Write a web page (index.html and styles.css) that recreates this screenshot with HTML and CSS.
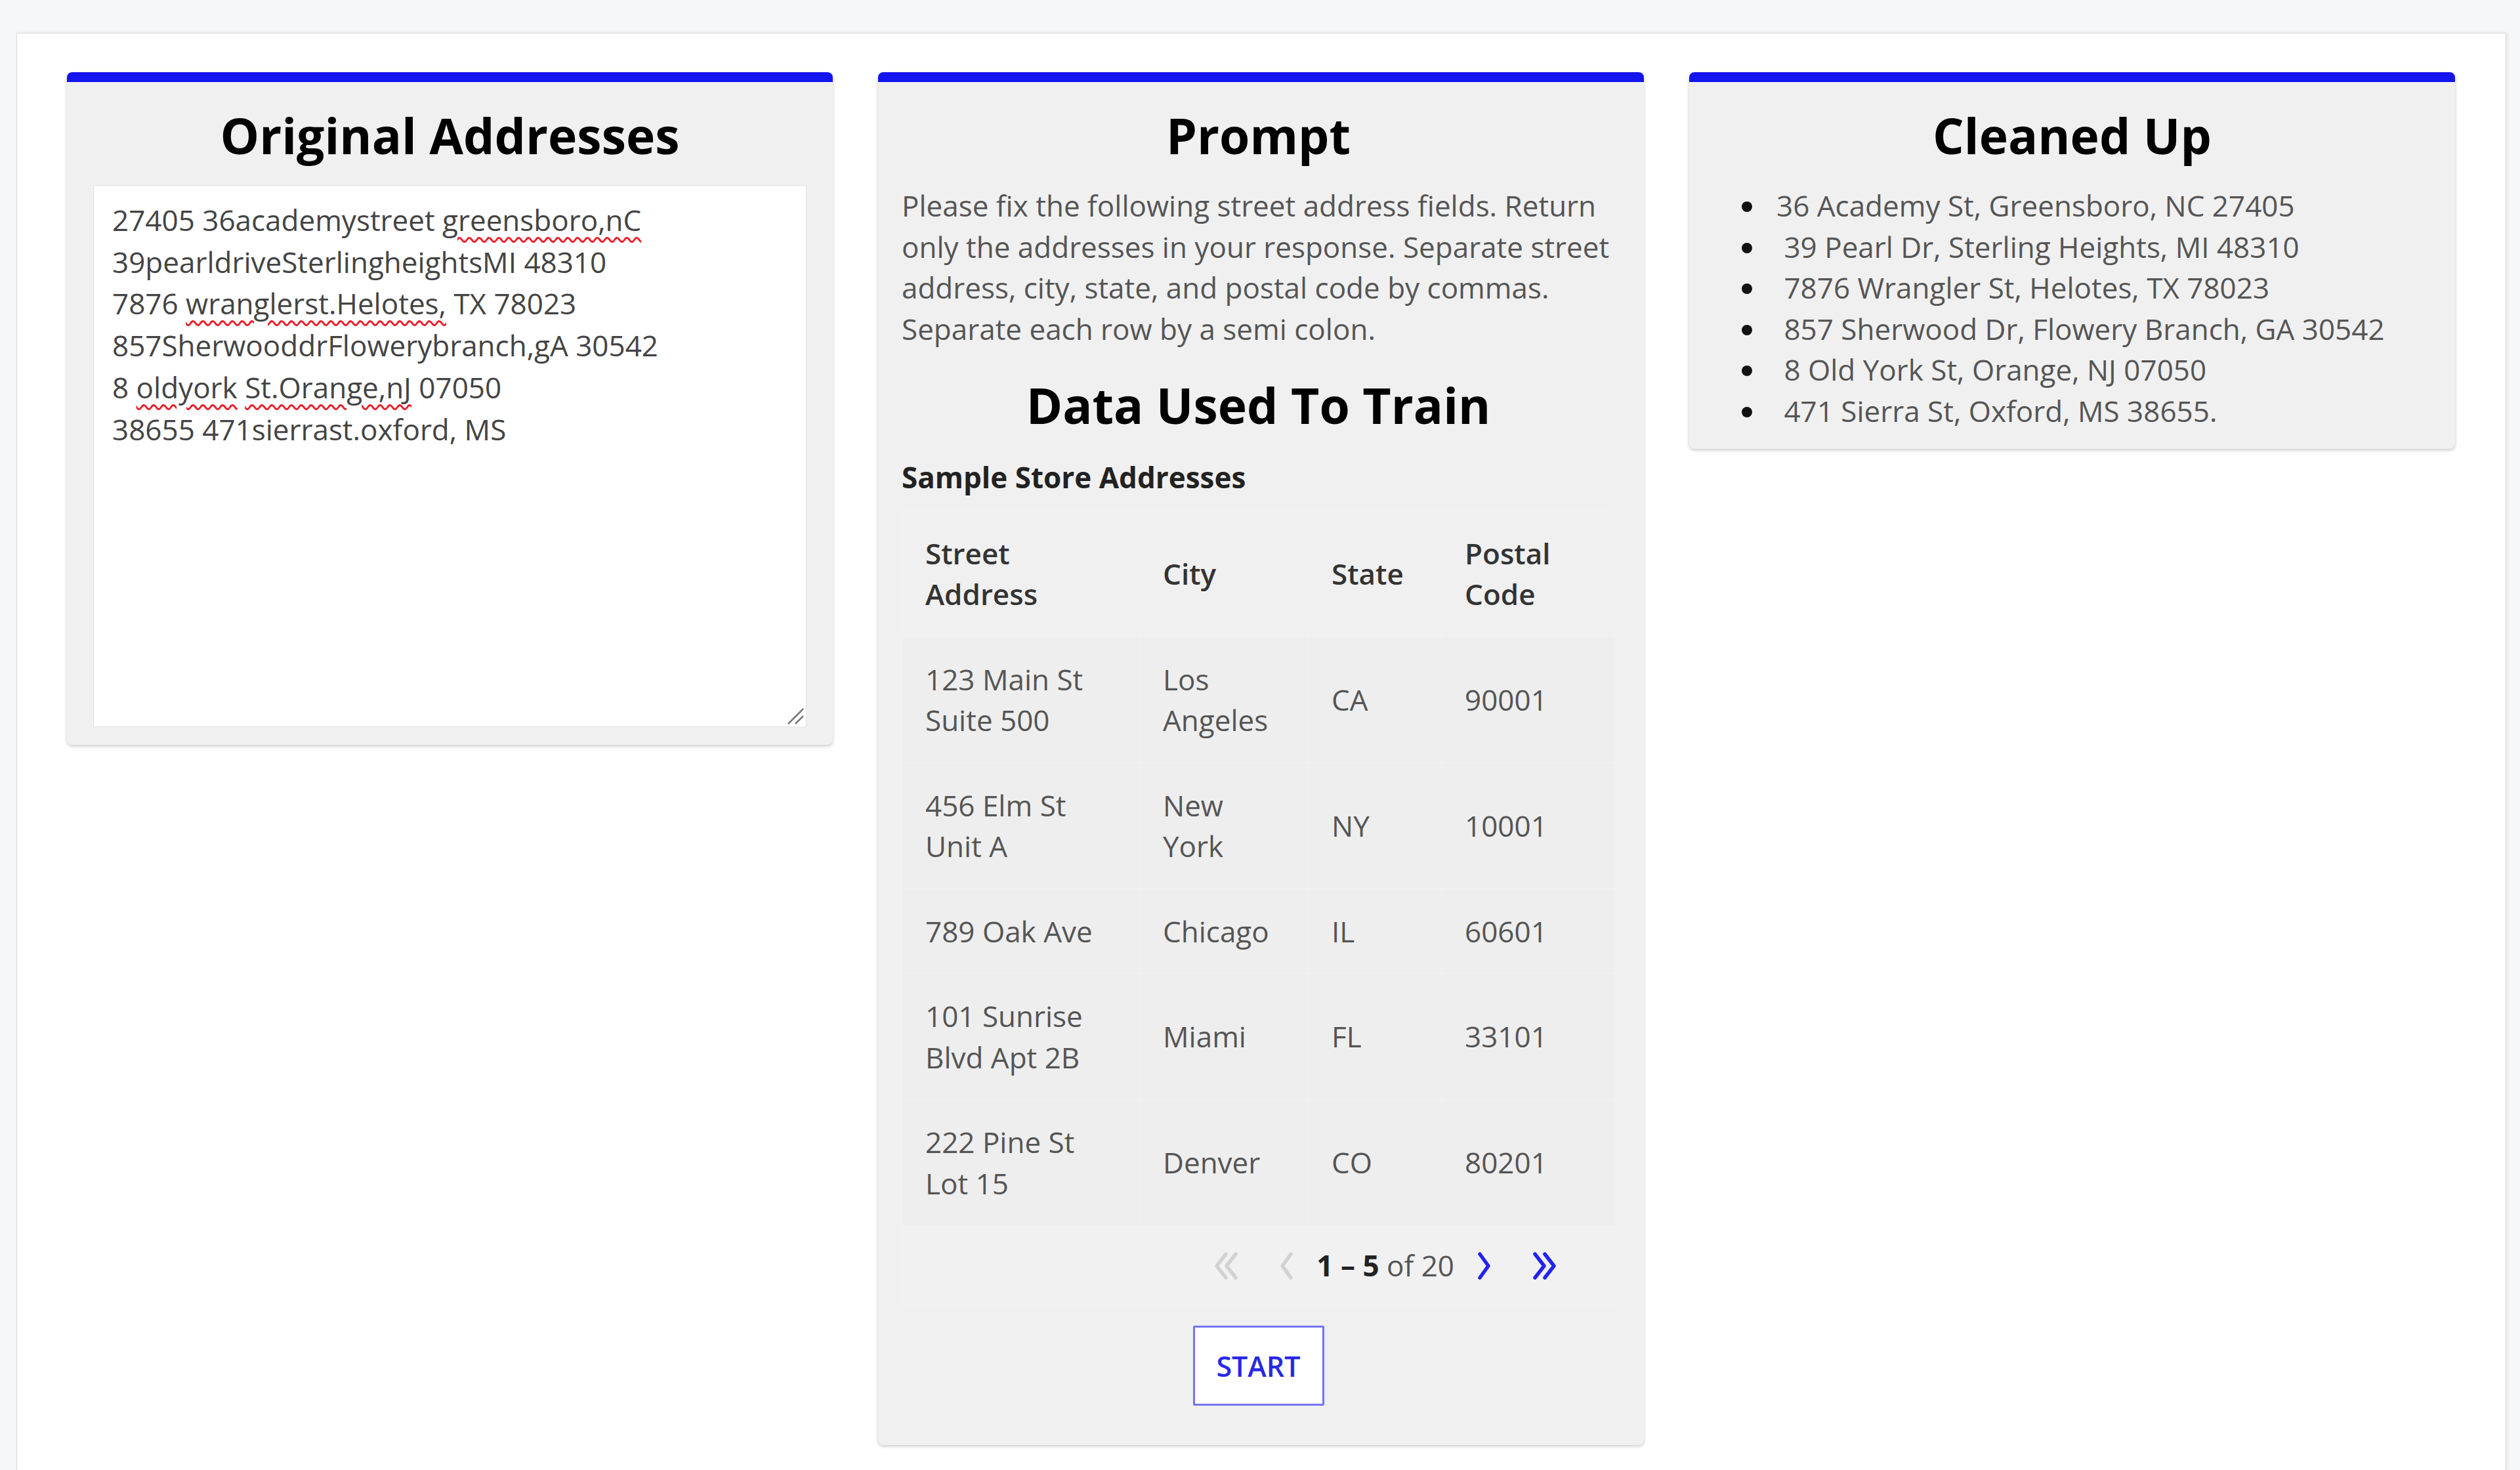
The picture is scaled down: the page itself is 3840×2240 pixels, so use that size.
FILE: index.html
```html
<!DOCTYPE html>
<html lang="en">
<head>
<meta charset="utf-8">
<title>Address Cleanup</title>
<link rel="stylesheet" href="styles.css">
</head>
<body>
<main class="page">
  <section class="card card--input">
    <h2 class="card-title">Original Addresses</h2>
    <div class="textbox" role="textbox" aria-multiline="true">
      <div class="tline">27405 36academystreet <span class="spell">greensboro,nC</span></div>
      <div class="tline">39pearldriveSterlingheightsMI 48310</div>
      <div class="tline">7876 <span class="spell">wranglerst.Helotes,</span> TX 78023</div>
      <div class="tline">857SherwooddrFlowerybranch,gA 30542</div>
      <div class="tline">8 <span class="spell">oldyork</span> <span class="spell">St.Orange,nJ</span> 07050</div>
      <div class="tline">38655 471sierrast.oxford, MS</div>
      <span class="grip" aria-hidden="true">
        <svg width="30" height="30" viewBox="0 0 30 30"><line x1="28" y1="5" x2="5" y2="28"/><line x1="28" y1="16" x2="16" y2="28"/></svg>
      </span>
    </div>
  </section>

  <section class="card card--prompt">
    <h2 class="card-title">Prompt</h2>
    <p class="prompt-text">Please fix the following street address fields. Return only the addresses in your response. Separate street address, city, state, and postal code by commas. Separate each row by a semi colon.</p>
    <h2 class="card-title card-title--sub">Data Used To Train</h2>
    <h3 class="table-caption">Sample Store Addresses</h3>
    <table class="data-table">
      <colgroup><col class="c1"><col class="c2"><col class="c3"><col class="c4"></colgroup>
      <thead>
        <tr><th>Street Address</th><th>City</th><th>State</th><th>Postal Code</th></tr>
      </thead>
      <tbody>
        <tr><td>123 Main St Suite 500</td><td>Los Angeles</td><td>CA</td><td>90001</td></tr>
        <tr><td>456 Elm St Unit A</td><td>New York</td><td>NY</td><td>10001</td></tr>
        <tr><td>789 Oak Ave</td><td>Chicago</td><td>IL</td><td>60601</td></tr>
        <tr><td>101 Sunrise Blvd Apt 2B</td><td>Miami</td><td>FL</td><td>33101</td></tr>
        <tr><td>222 Pine St Lot 15</td><td>Denver</td><td>CO</td><td>80201</td></tr>
      </tbody>
      <tfoot>
        <tr><td colspan="4" class="pager-cell">
          <div class="pager">
            <span class="pg-btn pg-btn--off"><svg width="48" height="48" viewBox="0 0 48 48"><polyline points="24,6 10,24 24,42"/><polyline points="39,6 25,24 39,42"/></svg></span>
            <span class="pg-btn pg-btn--off"><svg width="48" height="48" viewBox="0 0 48 48"><polyline points="31,6 18,24 31,42"/></svg></span>
            <span class="pg-range"><b>1 – 5</b> of 20</span>
            <span class="pg-btn"><svg width="48" height="48" viewBox="0 0 48 48"><polyline points="17,6 30,24 17,42"/></svg></span>
            <span class="pg-btn"><svg width="48" height="48" viewBox="0 0 48 48"><polyline points="9,6 23,24 9,42"/><polyline points="24,6 38,24 24,42"/></svg></span>
          </div>
        </td></tr>
      </tfoot>
    </table>
    <div class="actions"><button class="start-btn" type="button">START</button></div>
  </section>

  <section class="card card--output">
    <h2 class="card-title">Cleaned Up</h2>
    <ul class="result-list">
      <li>36 Academy St, Greensboro, NC 27405</li>
      <li>&nbsp;39 Pearl Dr, Sterling Heights, MI 48310</li>
      <li>&nbsp;7876 Wrangler St, Helotes, TX 78023</li>
      <li>&nbsp;857 Sherwood Dr, Flowery Branch, GA 30542</li>
      <li>&nbsp;8 Old York St, Orange, NJ 07050</li>
      <li>&nbsp;471 Sierra St, Oxford, MS 38655.</li>
    </ul>
  </section>
</main>
</body>
</html>
```

FILE: styles.css
```css
* { box-sizing: border-box; }

html, body { margin: 0; height: 100%; }

body {
  background: #f6f7f9;
  font-family: "Open Sans", "Noto Sans", sans-serif;
  font-size: 44px;
  line-height: 62.5px;
  color: #555;
}

.page {
  margin: 50px 21px 12px 25px;
  min-height: calc(100vh - 62px);
  background: #fff;
  border: 1px solid #dadada;
  box-shadow: 2px 0 5px rgba(0, 0, 0, 0.08);
  padding: 59px 77px 40px 76px;
  display: flex;
  gap: 69px;
  align-items: flex-start;
}

.card {
  flex: 1 1 0;
  min-width: 0;
  background: #f0f0f0;
  border-top: 15px solid #1414ee;
  border-radius: 8px;
  box-shadow: 0 2px 5px rgba(0, 0, 0, 0.22);
  padding: 31px 40px 27px;
}

.card-title {
  margin: 0 0 26px;
  font-size: 75px;
  line-height: 100px;
  font-weight: 700;
  color: #000;
  text-align: center;
}

.card-title--sub { margin: 35px 0 0; }

/* Original addresses */
.textbox {
  position: relative;
  margin-top: 5px;
  height: 826px;
  background: #fff;
  border: 1px solid #e4e4e4;
  box-shadow: inset 0 1px 2px rgba(0, 0, 0, 0.05);
  padding: 21px 28px 16px;
  color: #444;
  line-height: 63.7px;
  white-space: nowrap;
}

.spell {
  text-decoration: underline wavy #e8202a;
  text-decoration-thickness: 3px;
  text-underline-offset: 9px;
}

.grip {
  position: absolute;
  right: 2px;
  bottom: 2px;
  width: 30px;
  height: 30px;
  line-height: 0;
}

.grip line { stroke: #777; stroke-width: 2.5; }

/* Prompt */
.card--prompt { padding: 31px 44px 28px 36px; }

.prompt-text { margin: 0; }

.table-caption {
  margin: 29px 0 0;
  font-size: 44px;
  line-height: 62.5px;
  font-weight: 700;
  color: #222;
}

.data-table {
  margin-top: 19px;
  width: 100%;
  table-layout: fixed;
  border-collapse: collapse;
  background: #eeeeee;
}

.c1 { width: 362px; }
.c2 { width: 257px; }
.c3 { width: 203px; }

.data-table th,
.data-table td {
  text-align: left;
  vertical-align: middle;
  padding: 33px 30px 33px 35px;
  line-height: 62.5px;
  border: 1px solid #f2f2f2;
}

.data-table th {
  background: #f0f0f0;
  font-weight: 600;
  color: #333;
}

.data-table td { color: #555; }

.data-table .pager-cell {
  padding: 0;
  background: #f1f1f1;
}

.pager {
  height: 121px;
  display: flex;
  align-items: center;
  justify-content: flex-end;
  padding-right: 60px;
}

.pg-btn {
  width: 92px;
  height: 92px;
  display: flex;
  align-items: center;
  justify-content: center;
}

.pg-btn polyline {
  fill: none;
  stroke: #2222ee;
  stroke-width: 5.5;
  stroke-linecap: round;
  stroke-linejoin: round;
}

.pg-btn--off polyline { stroke: #d2d2d2; }

.pg-range { color: #555; white-space: nowrap; }
.pg-range b { color: #222; font-weight: 700; }

.actions {
  display: flex;
  justify-content: center;
  margin: 30px 0 32px;
}

.start-btn {
  width: 200px;
  height: 122px;
  background: #fff;
  border: 3px solid #7474f2;
  border-radius: 2px;
  color: #2828e6;
  font-family: inherit;
  font-size: 43px;
  font-weight: 600;
  padding: 0;
}

/* Cleaned up */
.result-list {
  margin: 0;
  padding-left: 78px;
  color: #555;
}

.result-list li { padding-left: 15px; }

.result-list li::marker { color: #111; }
```
